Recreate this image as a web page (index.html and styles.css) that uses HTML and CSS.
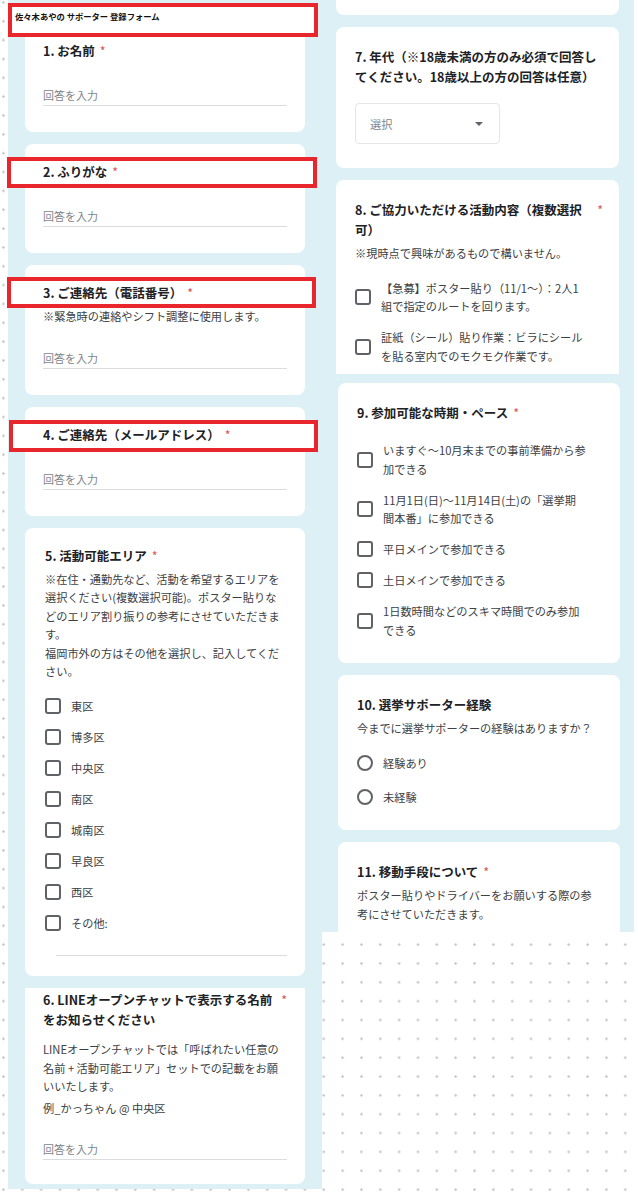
FILE: index.html
```html
<!DOCTYPE html>
<html lang="ja">
<head>
    <meta charset="UTF-8">
    <title>佐々木あやの サポーター 登録フォーム</title>
    <link rel="stylesheet" href="styles.css">
</head>
<body>
<div class="sheet">

    <div class="col-left">
        <section class="card">
            <div class="q-title"><span>1. お名前</span><span class="req">*</span></div>
            <div class="answer">回答を入力</div>
        </section>
        <section class="card">
            <div class="q-title"><span>2. ふりがな</span><span class="req">*</span></div>
            <div class="answer">回答を入力</div>
        </section>
        <section class="card">
            <div class="q-title"><span>3. ご連絡先（電話番号）</span><span class="req">*</span></div>
            <p class="desc">※緊急時の連絡やシフト調整に使用します。</p>
            <div class="answer">回答を入力</div>
        </section>
        <section class="card">
            <div class="q-title"><span>4. ご連絡先（メールアドレス）</span><span class="req">*</span></div>
            <div class="answer">回答を入力</div>
        </section>
        <section class="card card-area">
            <div class="q-title"><span>5. 活動可能エリア</span><span class="req">*</span></div>
            <p class="desc">※在住・通勤先など、活動を希望するエリアを選択ください(複数選択可能)。ポスター貼りなどのエリア割り振りの参考にさせていただきます。<br>福岡市外の方はその他を選択し、記入してください。</p>
            <ul class="options">
                <li class="choice"><span class="box"></span><span class="label">東区</span></li>
                <li class="choice"><span class="box"></span><span class="label">博多区</span></li>
                <li class="choice"><span class="box"></span><span class="label">中央区</span></li>
                <li class="choice"><span class="box"></span><span class="label">南区</span></li>
                <li class="choice"><span class="box"></span><span class="label">城南区</span></li>
                <li class="choice"><span class="box"></span><span class="label">早良区</span></li>
                <li class="choice"><span class="box"></span><span class="label">西区</span></li>
                <li class="choice"><span class="box"></span><span class="label">その他:</span></li>
            </ul>
            <div class="other-line"></div>
        </section>
        <section class="card card-line">
            <div class="q-title"><span>6. LINEオープンチャットで表示する名前をお知らせください</span><span class="req">*</span></div>
            <p class="desc">LINEオープンチャットでは「呼ばれたい任意の名前 + 活動可能エリア」セットでの記載をお願いいたします。</p>
            <p class="desc example">例_かっちゃん @ 中央区</p>
            <div class="answer">回答を入力</div>
        </section>
    </div>

    <div class="col-right">
        <div class="panel panel-top">
            <div class="card card-stub"></div>
            <section class="card">
                <div class="q-title"><span>7. 年代（※18歳未満の方のみ必須で回答し<br>てください。18歳以上の方の回答は任意）</span></div>
                <div class="select"><span>選択</span><span class="caret"></span></div>
            </section>
            <section class="card card-cut">
                <div class="q-title"><span>8. ご協力いただける活動内容（複数選択可）</span><span class="req">*</span></div>
                <p class="desc">※現時点で興味があるもので構いません。</p>
                <ul class="options">
                    <li class="choice"><span class="box"></span><span class="label">【急募】ポスター貼り（11/1〜）：2人1<br>組で指定のルートを回ります。</span></li>
                    <li class="choice"><span class="box"></span><span class="label">証紙（シール）貼り作業：ビラにシール<br>を貼る室内でのモクモク作業です。</span></li>
                </ul>
            </section>
        </div>

        <div class="panel panel-bottom">
            <section class="card">
                <div class="q-title"><span>9. 参加可能な時期・ペース</span><span class="req">*</span></div>
                <ul class="options">
                    <li class="choice"><span class="box"></span><span class="label">いますぐ〜10月末までの事前準備から参<br>加できる</span></li>
                    <li class="choice"><span class="box"></span><span class="label">11月1日(日)〜11月14日(土)の「選挙期<br>間本番」に参加できる</span></li>
                    <li class="choice"><span class="box"></span><span class="label">平日メインで参加できる</span></li>
                    <li class="choice"><span class="box"></span><span class="label">土日メインで参加できる</span></li>
                    <li class="choice"><span class="box"></span><span class="label">1日数時間などのスキマ時間でのみ参加<br>できる</span></li>
                </ul>
            </section>
            <section class="card">
                <div class="q-title"><span>10. 選挙サポーター経験</span></div>
                <p class="desc">今までに選挙サポーターの経験はありますか？</p>
                <ul class="options radios">
                    <li class="choice"><span class="box dot"></span><span class="label">経験あり</span></li>
                    <li class="choice"><span class="box dot"></span><span class="label">未経験</span></li>
                </ul>
            </section>
            <section class="card card-cut">
                <div class="q-title"><span>11. 移動手段について</span><span class="req">*</span></div>
                <p class="desc">ポスター貼りやドライバーをお願いする際の参<br>考にさせていただきます。</p>
            </section>
        </div>
    </div>

    <!-- red highlight frames drawn over the screenshots -->
    <div class="mark mark-head">佐々木あやの サポーター 登録フォーム</div>
    <div class="mark mark-q2"></div>
    <div class="mark mark-q3"></div>
    <div class="mark mark-q4"></div>
</div>
</body>
</html>
```

FILE: styles.css
```css
* {
    box-sizing: border-box;
}

body {
    margin: 0;
    background-color: #fff;
    background-image: radial-gradient(circle, #c4c4c4 0.9px, transparent 1.5px);
    background-size: 18.85px 18.85px;
    background-position: -6px -7px;
    font-family: "Noto Sans CJK JP", "Noto Sans", sans-serif;
    color: #3c4043;
}

.sheet {
    position: relative;
    width: 638px;
    height: 1199px;
    padding-left: 8px;
    display: grid;
    grid-template-columns: 314px 312px;
    align-items: start;
}

/* columns of pasted form screenshots */
.col-left {
    background: #dcf0f5;
    padding: 23px 17px 5px;
    display: flex;
    flex-direction: column;
    gap: 12px;
}

.panel {
    background: #dcf0f5;
    display: flex;
    flex-direction: column;
    gap: 12px;
}
.panel-top {
    padding: 0 15px 0 14px;
}
.panel-bottom {
    padding: 9px 14px 0 16px;
}

.card {
    background: #fff;
    border-radius: 8px;
    padding: 18px 18px 26px;
}
.col-right .card {
    padding: 20px 16px 24px 19px;
}
.col-right .card-cut {
    padding-bottom: 9px;
    border-radius: 8px 8px 0 0;
}
.col-right .card-stub {
    height: 15px;
    padding: 0;
    border-radius: 0 0 8px 8px;
}
.card-area {
    padding-left: 20px;
    padding-bottom: 20px;
}
.card-line {
    padding-top: 2px;
    padding-bottom: 24px;
    border-radius: 0 0 8px 8px;
}
.card-line .desc {
    margin-top: 10px;
}
.card-line .example {
    margin-top: 3px;
}

/* question parts */
.q-title {
    position: relative;
    z-index: 2;
    display: flex;
    align-items: flex-start;
    font-size: 12.5px;
    font-weight: 700;
    line-height: 20px;
    color: #202124;
}
.req {
    flex: none;
    margin-left: 5px;
    font-weight: 400;
    color: #d9534f;
}

.desc {
    margin: 4px 0 0;
    font-size: 11.2px;
    line-height: 18.5px;
}

.answer {
    margin-top: 24px;
    font-size: 11px;
    line-height: 20px;
    color: #80868b;
    border-bottom: 1px solid #dadce0;
}
.desc + .answer {
    margin-top: 22px;
}

.select {
    width: 145px;
    height: 41px;
    margin-top: 16px;
    padding: 0 16px 0 14px;
    border: 1px solid #e3e5e8;
    border-radius: 4px;
    display: flex;
    align-items: center;
    justify-content: space-between;
    font-size: 11.2px;
    color: #80868b;
}
.caret {
    border-top: 4px solid #5f6368;
    border-left: 4px solid transparent;
    border-right: 4px solid transparent;
}

.options {
    list-style: none;
    margin: 16px 0 0;
    padding: 0;
    display: flex;
    flex-direction: column;
    gap: 12.5px;
}
.q-title + .options {
    margin-top: 18px;
}
.radios {
    gap: 15.5px;
}
.choice {
    display: flex;
    align-items: center;
    gap: 10px;
    font-size: 11.2px;
    line-height: 18.5px;
}
.box {
    flex: none;
    width: 16px;
    height: 16px;
    border: 2px solid #5f6368;
    border-radius: 3px;
}
.dot {
    border-radius: 50%;
}

.other-line {
    height: 21px;
    margin: 3px 0 0 11px;
    border-bottom: 1px solid #dadce0;
}

/* red frames */
.mark {
    position: absolute;
    z-index: 1;
    background: #fff;
    border: 4px solid #e8262b;
}
.mark-head {
    left: 8px;
    top: 3px;
    width: 310px;
    height: 34px;
    padding: 4px 3px;
    font-size: 8.3px;
    font-weight: 700;
    line-height: 10px;
    color: #111;
}
.mark-q2 {
    left: 7px;
    top: 157px;
    width: 310px;
    height: 31px;
}
.mark-q3 {
    left: 7px;
    top: 277px;
    width: 309px;
    height: 31px;
}
.mark-q4 {
    left: 9px;
    top: 420px;
    width: 309px;
    height: 32px;
}
```
